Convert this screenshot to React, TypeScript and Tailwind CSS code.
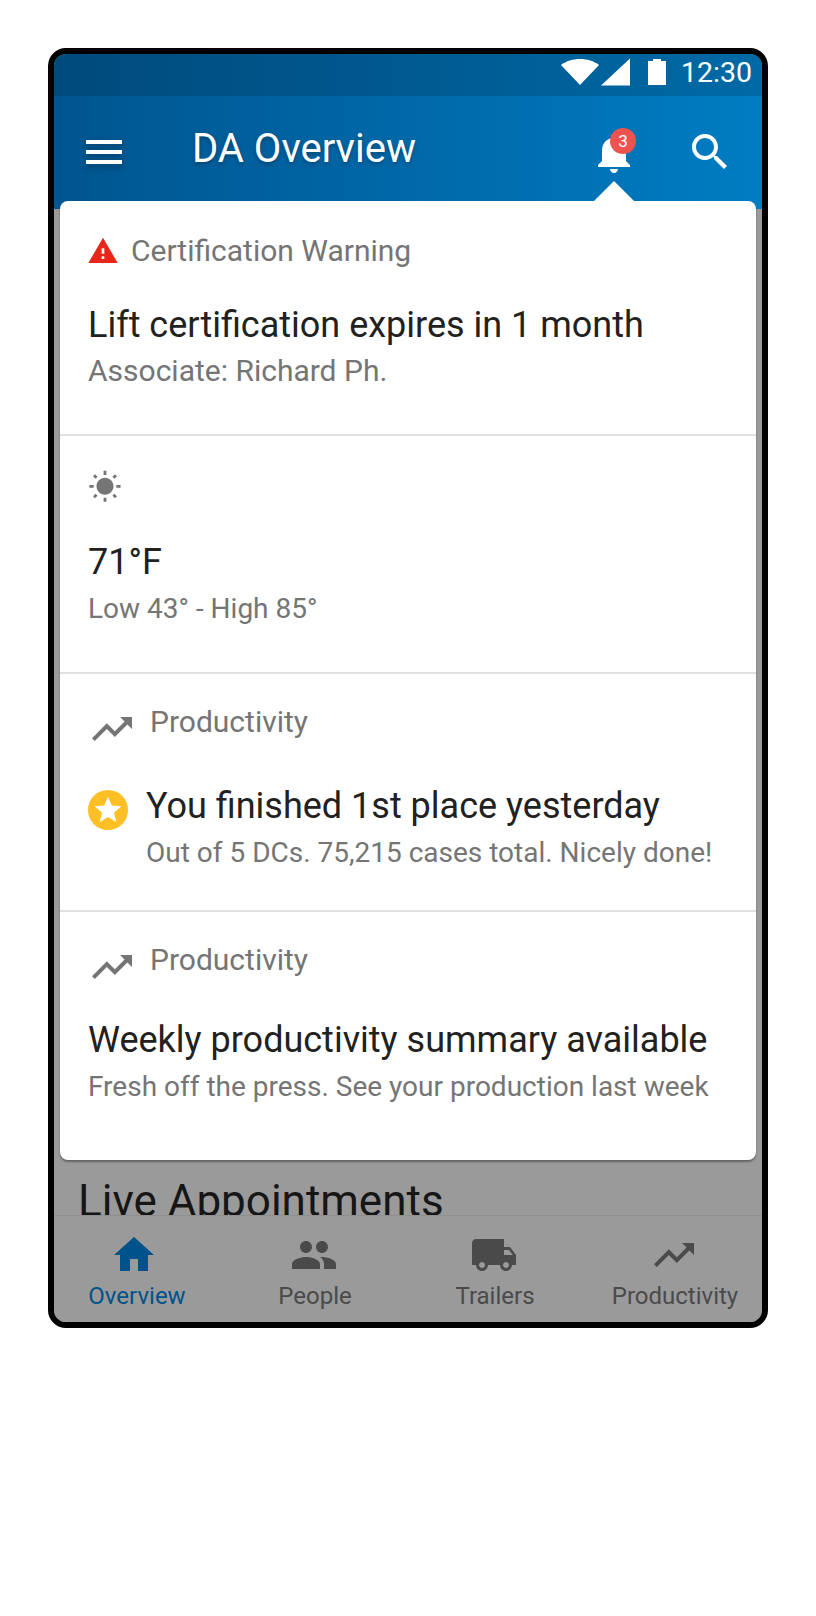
import React from 'react';

function Icon({ d, className }: { d: string; className: string }) {
  return (
    <svg viewBox="0 0 24 24" className={className} fill="currentColor">
      <path d={d} />
    </svg>
  );
}

const paths = {
  menu: 'M3 18h18v-2H3v2zm0-5h18v-2H3v2zm0-7v2h18V6H3z',
  bell: 'M12 22c1.1 0 2-.9 2-2h-4c0 1.1.9 2 2 2zm6-6v-5c0-3.07-1.63-5.64-4.5-6.32V4c0-.83-.67-1.5-1.5-1.5s-1.5.67-1.5 1.5v.68C7.64 5.36 6 7.92 6 11v5l-2 2v1h16v-1l-2-2z',
  search:
    'M15.5 14h-.79l-.28-.27C15.41 12.59 16 11.11 16 9.5 16 5.91 13.09 3 9.5 3S3 5.91 3 9.5 5.91 16 9.5 16c1.61 0 3.09-.59 4.23-1.57l.27.28v.79l5 4.99L20.49 19l-4.99-5zm-6 0C7.01 14 5 11.99 5 9.5S7.01 5 9.5 5 14 7.01 14 9.5 11.99 14 9.5 14z',
  warning: 'M1 21h22L12 2 1 21zm12-3h-2v-2h2v2zm0-4h-2v-4h2v4z',
  sun: 'M6.76 4.84l-1.8-1.79-1.41 1.41 1.79 1.79 1.42-1.41zM4 10.5H1v2h3v-2zm9-9.95h-2V3.5h2V.55zm7.45 3.91l-1.41-1.41-1.79 1.79 1.41 1.41 1.79-1.79zm-3.21 13.7l1.79 1.8 1.41-1.41-1.8-1.79-1.4 1.4zM20 10.5v2h3v-2h-3zm-8-5c-3.31 0-6 2.69-6 6s2.69 6 6 6 6-2.69 6-6-2.69-6-6-6zm-1 16.95h2V19.5h-2v2.95zm-7.45-3.91l1.41 1.41 1.79-1.8-1.41-1.41-1.79 1.8z',
  trend: 'M16 6l2.29 2.29-4.88 4.88-4-4L2 16.59 3.41 18l6-6 4 4 6.3-6.29L22 12V6z',
  home: 'M10 20v-6h4v6h5v-8h3L12 3 2 12h3v8z',
  people:
    'M16 11c1.66 0 2.99-1.34 2.99-3S17.66 5 16 5c-1.66 0-3 1.34-3 3s1.34 3 3 3zm-8 0c1.66 0 2.99-1.34 2.99-3S9.66 5 8 5C6.34 5 5 6.34 5 8s1.34 3 3 3zm0 2c-2.33 0-7 1.17-7 3.5V19h14v-2.5c0-2.33-4.67-3.5-7-3.5zm8 0c-.29 0-.62.02-.97.05 1.16.84 1.97 1.97 1.97 3.45V19h6v-2.5c0-2.33-4.67-3.5-7-3.5z',
  truck:
    'M20 8h-3V4H3c-1.1 0-2 .9-2 2v11h2c0 1.66 1.34 3 3 3s3-1.34 3-3h6c0 1.66 1.34 3 3 3s3-1.34 3-3h2v-5l-3-4zM6 18.5c-.83 0-1.5-.67-1.5-1.5s.67-1.5 1.5-1.5 1.5.67 1.5 1.5-.67 1.5-1.5 1.5zm13.5-9l1.96 2.5H17V9.5h2.5zm-1.5 9c-.83 0-1.5-.67-1.5-1.5s.67-1.5 1.5-1.5 1.5.67 1.5 1.5-.67 1.5-1.5 1.5z',
  star: 'M12 17.27L18.18 21l-1.64-7.03L22 9.24l-7.19-.61L12 2 9.19 8.63 2 9.24l5.46 4.73L5.82 21z'
};

const tabs = [
  { label: 'Overview', icon: paths.home, active: true },
  { label: 'People', icon: paths.people, active: false },
  { label: 'Trailers', icon: paths.truck, active: false },
  { label: 'Productivity', icon: paths.trend, active: false }
];

function Label({ children }: { children: React.ReactNode }) {
  return <p className="text-[30px] leading-[34px] text-[#757575]">{children}</p>;
}

function Title({ children }: { children: React.ReactNode }) {
  return <p className="text-[36px] leading-[40px] text-[#212121]">{children}</p>;
}

function Sub({ children }: { children: React.ReactNode }) {
  return <p className="mt-[10px] text-[28px] leading-[34px] text-[#757575]">{children}</p>;
}

function NotificationCard() {
  return (
    <div className="absolute top-[147px] right-[6px] left-[6px] z-10 rounded-[8px] bg-white shadow-[0_2px_2px_rgba(0,0,0,0.35)]">
      <div className="absolute -top-[20px] right-[122px] h-0 w-0 border-x-[20px] border-b-[20px] border-x-transparent border-b-white" />

      <section className="h-[235px] border-b-2 border-[#e0e0e0] pt-[33px] pl-[28px]">
        <div className="flex items-center gap-[11px]">
          <Icon d={paths.warning} className="h-[32px] w-[32px] -translate-x-[1px] text-[#e9261a]" />
          <Label>Certification Warning</Label>
        </div>
        <div className="mt-[37px]">
          <Title>Lift certification expires in 1 month</Title>
          <p className="mt-[9px] text-[30px] leading-[34px] text-[#757575]">Associate: Richard Ph.</p>
        </div>
      </section>

      <section className="h-[238px] border-b-2 border-[#e0e0e0] pt-[34px] pl-[28px]">
        <Icon d={paths.sun} className="h-[34px] w-[34px] text-[#757575]" />
        <div className="mt-[38px]">
          <Title>71°F</Title>
          <Sub>Low 43° - High 85°</Sub>
        </div>
      </section>

      <section className="h-[238px] border-b-2 border-[#e0e0e0] pt-[31px] pl-[28px]">
        <div className="flex items-start gap-[14px]">
          <Icon d={paths.trend} className="h-[48px] w-[48px] text-[#757575]" />
          <Label>Productivity</Label>
        </div>
        <div className="mt-[33px] flex gap-[18px]">
          <div className="relative mt-[4px] flex h-[40px] w-[40px] items-center justify-center rounded-full bg-[#fcbf26]">
            <Icon d={paths.star} className="h-[32px] w-[32px] text-white" />
          </div>
          <div>
            <Title>You finished 1st place yesterday</Title>
            <Sub>Out of 5 DCs. 75,215 cases total. Nicely done!</Sub>
          </div>
        </div>
      </section>

      <section className="h-[248px] pt-[31px] pl-[28px]">
        <div className="flex items-start gap-[14px]">
          <Icon d={paths.trend} className="h-[48px] w-[48px] text-[#757575]" />
          <Label>Productivity</Label>
        </div>
        <div className="mt-[29px]">
          <Title>Weekly productivity summary available</Title>
          <Sub>Fresh off the press. See your production last week</Sub>
        </div>
      </section>
    </div>
  );
}

export default function App() {
  return (
    <div className="h-[1616px] bg-white pt-[48px] pl-[48px] font-['Roboto',sans-serif]">
      <div className="relative flex h-[1280px] w-[720px] flex-col overflow-hidden rounded-[18px] border-[6px] border-black bg-[#9a9a9a]">
        <div className="flex h-[42px] items-center justify-end bg-gradient-to-r from-[#004a7c] to-[#006aa6] pr-[10px] pb-[6px] text-white">
          <svg viewBox="0 0 38 26" className="h-[28px] w-[38px]" fill="currentColor">
            <path d="M19 26L0 6C5 2 12 0 19 0s14 2 19 6z" />
          </svg>
          <svg viewBox="0 0 28 26" className="ml-[2px] h-[28px] w-[29px]" fill="currentColor">
            <path d="M0 26L28 0v26z" />
          </svg>
          <svg viewBox="0 0 18 26" className="ml-[18px] h-[28px] w-[18px]" fill="currentColor">
            <path d="M5 0h8v2h5v24H0V2h5z" />
          </svg>
          <span className="ml-[15px] pt-[2px] text-[28.5px] leading-none">12:30</span>
        </div>

        <div className="flex h-[113px] items-start bg-gradient-to-r from-[#00558f] to-[#007dc3] text-white">
          <Icon d={paths.menu} className="mt-[32px] ml-[26px] h-[48px] w-[48px] drop-shadow-[0_3px_3px_rgba(0,0,0,0.3)]" />
          <h1 className="mt-[31px] ml-[64px] text-[40px] leading-[44px] [text-shadow:0_2px_4px_rgba(0,0,0,0.3)]">
            DA Overview
          </h1>
          <div className="relative mt-[33px] ml-auto">
            <Icon d={paths.bell} className="h-[48px] w-[48px]" />
            <span className="absolute -top-[1px] left-[20px] flex h-[26px] w-[26px] items-center justify-center rounded-full bg-[#ef5350] text-[17px] leading-none">
              3
            </span>
          </div>
          <Icon d={paths.search} className="mt-[32px] mr-[28px] ml-[48px] h-[48px] w-[48px]" />
        </div>

        <NotificationCard />

        <main className="min-h-0 flex-1 overflow-hidden pl-[24px]">
          <div className="pt-[966px] text-[44px] leading-[52px] text-[#161616]">Live Appointments</div>
        </main>

        <nav className="-ml-[9px] grid h-[107px] grid-cols-[repeat(4,180px)] border-t border-[#8f8f8f] bg-[#9a9a9a]">
          {tabs.map((tab) => (
            <div
              key={tab.label}
              className={`flex flex-col items-center pt-[15px] ${tab.active ? 'text-[#00528a]' : 'text-[#4a4a4a]'}`}
            >
              <Icon d={tab.icon} className="h-[48px] w-[48px] -translate-x-[1px]" />
              <span className={`mt-[3px] text-[24px] leading-[28px] ${tab.active ? 'translate-x-[2px]' : ''}`}>
                {tab.label}
              </span>
            </div>
          ))}
        </nav>
      </div>
    </div>
  );
}
